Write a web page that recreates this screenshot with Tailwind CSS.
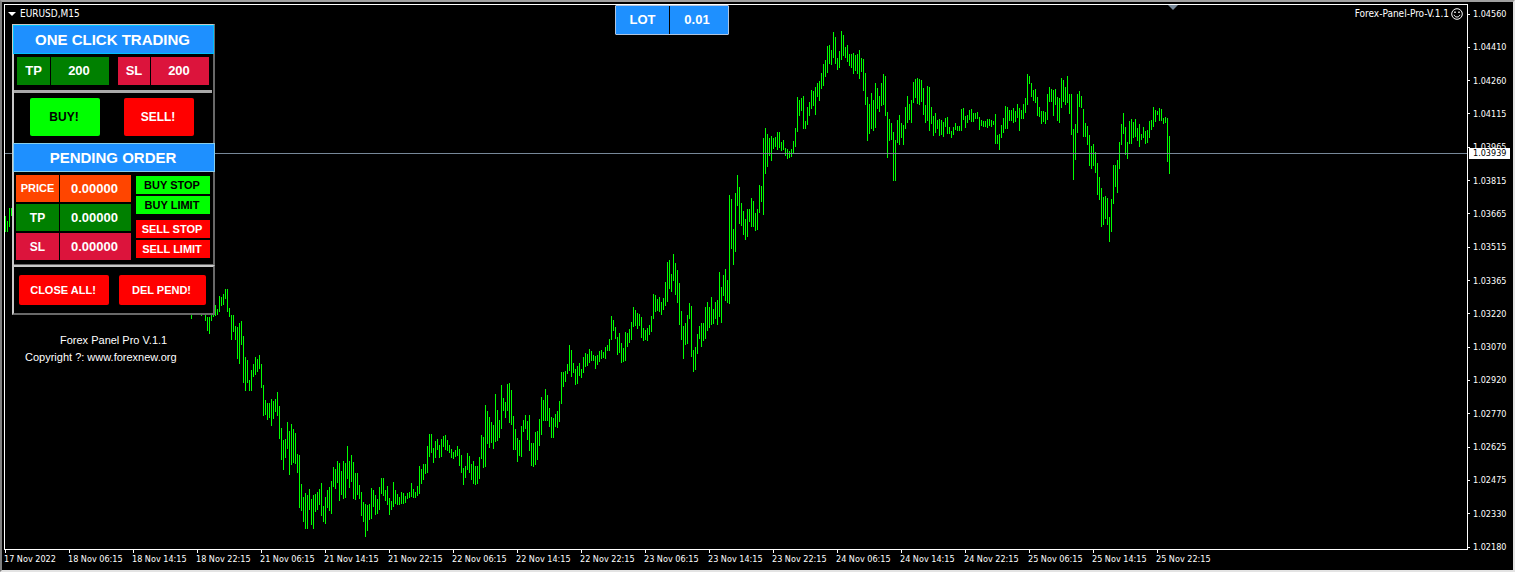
<!DOCTYPE html>
<html lang="en">
  <head>
    <meta charset="UTF-8" />
    <meta name="viewport" content="width=device-width, initial-scale=1.0" />
    <title>EURUSD,M15</title>
    <script src="https://cdn.jsdelivr.net/npm/@tailwindcss/browser@4"></script>
  </head>
  <body class="bg-black">
    <div
      class="h-screen flex flex-col bg-black text-white border-t-2 border-l-2 border-r-2 border-b-2 border-t-[#a0a0a0] border-l-[#808080] border-r-[#e3e3e3] border-b-[#e3e3e3] pt-[2px] pl-[2px] font-['DejaVu_Sans_Condensed','DejaVu_Sans',sans-serif] overflow-hidden"
    >
      <div class="flex flex-1 min-h-0">
        <!-- chart -->
        <main class="relative flex-1 min-w-0 border border-white">
          <svg class="absolute inset-0 w-full h-full" aria-hidden="true">
            <path id="bars" stroke="#00ff00" stroke-width="1" fill="none" />
            <path d="M1163 0h10l-5 5z" fill="#778899" />
          </svg>
          <div class="absolute left-0 right-0 top-[148px] h-px bg-[#778899]"></div>

          <header class="absolute top-0 left-0 right-0 flex justify-between">
            <button class="flex items-center gap-1 pl-[3px] pt-px text-[10px] leading-[14px]">
              <svg class="w-2 h-1" viewBox="0 0 8 4" aria-hidden="true"><path d="M0 0h8L4 4z" fill="#fff" /></svg>
              EURUSD,M15
            </button>
            <p class="flex items-center gap-[2px] pr-1 pt-[2px] text-[10px] leading-[14px]">
              Forex-Panel-Pro-V.1.1
              <svg class="w-3 h-3" viewBox="0 0 12 12" fill="none" stroke="#fff" aria-hidden="true">
                <circle cx="6" cy="6" r="5.3" />
                <path d="M3 6.8c.6 1.6 1.7 2.2 3 2.2s2.400-.6 3-2.200" />
                <path d="M4 3.500v1.500M8 3.500v1.500" stroke-width="1.500" />
              </svg>
            </p>
          </header>

          <div class="absolute top-0 left-[610px] w-[114px] h-[30px] flex gap-px bg-black border border-[#b0c4de] rounded-[1px] font-['Liberation_Sans',Arial,sans-serif] font-bold text-[13px]">
            <label for="lot" class="w-[53px] bg-[#1e90ff] flex items-center justify-center">LOT</label>
            <input id="lot" value="0.01" class="flex-1 min-w-0 bg-[#1e90ff] text-center pr-1 outline-none" />
          </div>

          <!-- trading panel -->
          <section class="absolute top-[19px] left-[7px] w-[203px] font-['Liberation_Sans',Arial,sans-serif] font-bold">
            <div class="bg-black border-t border-l-2 border-r-2 border-t-[#c8c8c8] border-l-[#c8c8c8] border-r-[#696969]">
              <h2 class="-mx-px h-[29px] pt-[2px] pr-[2px] flex items-center justify-center bg-[#1e90ff] border border-[#00bfff] text-[15px]">ONE CLICK TRADING</h2>
              <div class="flex gap-px h-9 pt-[3px] pb-[5px] pl-[3px] pr-1 text-[13px]">
                <label for="tp" class="w-[33px] bg-[#008000] flex items-center justify-center">TP</label>
                <input id="tp" value="200" class="flex-1 min-w-0 bg-[#008000] text-center pr-[2px] mr-2 outline-none" />
                <label for="sl" class="w-8 bg-[#dc143c] flex items-center justify-center">SL</label>
                <input id="sl" value="200" class="flex-1 min-w-0 bg-[#dc143c] text-center pr-[2px] outline-none" />
              </div>
              <div class="h-[3px] mr-px bg-[#a9a9a9]"></div>
              <div class="flex gap-6 pl-4 pt-[5px] pb-[7px] text-[12px]">
                <button class="w-[70px] h-[38px] pr-[2px] rounded-[2px] bg-[#00ff00] text-black">BUY!</button>
                <button class="w-[70px] h-[38px] pr-[2px] rounded-[2px] bg-[#ff0000]">SELL!</button>
              </div>
              <h2 class="-ml-px -mr-[2px] h-[29px] pt-[2px] pr-[2px] flex items-center justify-center bg-[#1e90ff] border border-[#87ceeb] text-[15px]">PENDING ORDER</h2>
              <div class="flex gap-[5px] pt-[3px] pb-1 pl-[2px] pr-[3px] border-b border-[#696969]">
                <div class="flex-1 min-w-0 flex flex-col gap-[2px] text-[13px]">
                  <div class="flex gap-px h-[27px]">
                    <label for="p-price" class="w-[43px] shrink-0 bg-[#ff4500] flex items-center justify-center text-[11px]">PRICE</label>
                    <input id="p-price" value="0.00000" class="flex-1 min-w-0 bg-[#ff4500] text-center pr-[2px] outline-none" />
                  </div>
                  <div class="flex gap-px h-[27px]">
                    <label for="p-tp" class="w-[43px] shrink-0 bg-[#008000] flex items-center justify-center text-[12px]">TP</label>
                    <input id="p-tp" value="0.00000" class="flex-1 min-w-0 bg-[#008000] text-center pr-[2px] outline-none" />
                  </div>
                  <div class="flex gap-px h-[27px]">
                    <label for="p-sl" class="w-[43px] shrink-0 bg-[#dc143c] flex items-center justify-center text-[12px]">SL</label>
                    <input id="p-sl" value="0.00000" class="flex-1 min-w-0 bg-[#dc143c] text-center pr-[2px] outline-none" />
                  </div>
                </div>
                <div class="w-[74px] shrink-0 flex flex-col gap-[2px] pt-px text-[11px] whitespace-nowrap">
                  <button class="h-[18px] pt-px pr-[2px] bg-[#00ff00] text-black">BUY STOP</button>
                  <button class="h-[18px] pt-px pr-[2px] bg-[#00ff00] text-black">BUY LIMIT</button>
                  <button class="h-[18px] pt-px pr-[2px] mt-1 bg-[#ff0000]">SELL STOP</button>
                  <button class="h-[18px] pt-px pr-[2px] bg-[#ff0000]">SELL LIMIT</button>
                </div>
              </div>
            </div>
            <div class="bg-black flex gap-[10px] py-2 pl-[5px] border-2 border-t-[#c8c8c8] border-l-[#c8c8c8] border-r-[#696969] border-b-[#696969] text-[11px]">
              <button class="w-[90px] h-[30px] pr-[2px] pt-px rounded-[2px] bg-[#ff0000]">CLOSE ALL!</button>
              <button class="w-[87px] h-[30px] pr-[2px] pt-px rounded-[2px] bg-[#ff0000]">DEL PEND!</button>
            </div>
            <footer class="pt-[17px] pl-[13px] font-normal text-[11px] leading-[17px]">
              <p class="pl-[35px]">Forex Panel Pro V.1.1</p>
              <p>Copyright ?: www.forexnew.org</p>
            </footer>
          </section>
        </main>

        <!-- price axis -->
        <aside class="relative w-[45px] text-[9px] leading-3">
          <ul id="prices" class="h-[calc(100%+3px)] flex flex-col justify-between pt-1"></ul>
          <p class="absolute top-[144px] left-px w-[41px] h-[11px] pl-1 leading-[11px] bg-white text-black">1.03939</p>
        </aside>
      </div>

      <!-- time axis -->
      <ul id="times" class="h-[20px] flex text-[9px] leading-3"></ul>
    </div>

    <script>
      // high/low of every bar in pixels, 2px per bar, counted from x / y
      const segments = [
        { x: 5, y: 170, bars: "46-62 51-62 38-57 38-46" },
        { x: 191, y: 270, bars: "40-49 40-44 40-44 40-44 40-45 40-46 40-45 40-51 47-61 47-64 40-51 40-47 35-46 39-45 26-42 27-36 24-35 19-29 19-42 38-47 45-70 45-62 56-70 57-89 53-94 51-75 66-113 87-121 90-113 110-121 100-121 94-107 87-105 89-102 85-99 94-118 115-146 130-145 133-150 133-148 129-156 131-149 129-142 122-146 136-169 158-190 170-200 169-188 152-179 161-205 154-195 159-193 163-194 184-203 185-238 214-241 227-252 223-259 225-259 219-240 229-255 225-259 224-242 222-240 219-235 213-246 236-252 227-254 220-238 217-241 211-244 197-217 199-219 191-213 193-231 201-225 191-229 193-228 176-209 191-218 185-212 192-229 203-230 203-225 215-229 222-246 232-252 234-267 235-261 234-250 218-249 220-237 225-245 229-244 217-240 208-224 208-226 220-231 216-235 228-245 231-240 212-237 220-234 224-235 227-235" },
        { x: 401, y: 320, bars: "172-184 173-184 176-183 173-179 172-178 163-177 169-178 172-178 166-176 146-174 149-164 144-160 144-154 126-153 114-137 114-133 128-143 121-138 119-130 125-138 119-137 116-127 115-130 120-131 125-133 129-138 132-139 130-137 126-136 129-146 135-153 148-165 146-158 133-150 136-153 144-160 141-164 146-165 146-164 137-159 115-139 117-148 85-147 91-124 97-128 102-123 105-129 74-122 90-121 100-118 65-109 78-91 82-98 64-91 63-103 70-105 96-130 109-130 118-142 120-136 106-137 100-112 95-109 101-120 95-131 123-146 123-147 112-145 111-140 99-126 77-115 80-101 69-101 75-101 88-107 97-118 98-118 94-107 91-108 81-102 52-84 52-67 51-62 44-54 25-51 30-57 43-53 49-65 46-64 43-56 49-58 37-53 33-47 34-46 29-43 31-41 35-41 36-49 35-45 31-42 30-39 32-38 27-39 25-31 19-31" },
        { x: 611, y: 130, bars: "186-210 190-201 197-209 207-225 203-223 213-233 218-232 202-231 203-217 199-213 192-210 177-197 180-196 183-199 184-196 187-208 198-211 200-210 198-211 195-205 186-202 164-189 165-182 169-181 167-182 172-185 168-180 152-176 132-172 130-159 144-162 124-151 133-165 140-173 153-195 181-210 196-229 193-215 185-214 173-189 176-227 220-242 217-240 204-224 196-209 193-217 193-211 177-209 172-201 177-198 167-195 179-194 172-189 170-195 142-187 157-193 145-166 139-171 150-173 65-174 69-119 99-135 63-122 45-76 57-94 73-96 81-105 89-110 79-107 79-92 68-97 71-97 83-101 79-100 55-83 56-72" },
        { x: 763, y: 20, bars: "118-195 108-154 114-147 118-136 116-141 118-129 117-127 112-130 112-128 122-131 120-130 128-136 129-139 131-138 129-137 121-134 108-127 77-112 80-96 78-91 76-109 101-109 87-105 82-96 70-89 71-86 67-95 63-77 61-81 53-69 44-66 40-57 26-53 25-44 30-45 12-38 17-44 38-50 31-48 11-40 15-36 27-38 25-42 34-46 34-48 33-54 35-51 34-54 30-59 38-52 39-71 53-85 77-121 84-114 73-109 80-111 63-108 68-89 76-92 63-86 54-85 56-96 92-138 99-121 103-120 112-161 120-161 100-123 95-125 103-118 105-125 87-109 76-103 84-100 80-103 62-83 59-78 58-84 59-85 60-82 68-95 85-103 66-101 67-111 87-104 96-116 93-113 100-109 99-116 100-115 102-117 98-107 97-114 107-114 111-118 107-115 103-110 106-111 106-111" },
        { x: 961, y: 60, bars: "49-71 48-60 56-68 55-63 50-60 49-62 53-62 53-59 52-59 57-70 60-66 61-67 61-67 59-68 59-66 60-67 61-65 54-84 75-84 74-90 65-78 58-73 46-69 47-69 50-61 50-61 48-63 51-62 44-58 48-71 50-59 44-59 38-53 14-45 16-24 23-37 30-41 29-43 37-56 47-57 51-64 51-62 52-64 34-60 27-42 29-42 30-56 29-45 37-61 38-63 18-48 20-42 27-45 16-43 34-54 34-75 69-120 64-100 34-73 31-47 36-48 49-77 63-77 66-85 75-106 86-109 84-106 92-113 103-135 117-140 128-167 137-165 136-159 138-165 157-182 139-172 105-144 105-127 100-133 82-109 64-85 53-74 67-95 82-99 61-84 59-84 62-78 59-77 68-81 64-87 74-80 67-78 71-84 70-83 61-78 60-70 47-67 50-62 51-55 48-61 49-61 58-64 57-63 58-102 76-114" },
      ];

      let d = "";
      segments.forEach((seg) => {
        seg.bars.split(" ").forEach((bar, i) => {
          const [high, low] = bar.split("-").map(Number);
          d += `M${seg.x + i * 2 - 4.5} ${seg.y + high - 5}V${seg.y + low - 5}`;
        });
      });
      document.getElementById("bars").setAttribute("d", d);

      const prices = [
        "1.04560", "1.04410", "1.04260", "1.04115", "1.03965", "1.03815",
        "1.03665", "1.03515", "1.03365", "1.03220", "1.03070", "1.02920",
        "1.02770", "1.02625", "1.02475", "1.02330", "1.02180",
      ];
      document.getElementById("prices").innerHTML = prices
        .map((p) => `<li class="flex items-center gap-[3px]"><span class="w-[2px] h-px bg-white"></span>${p}</li>`)
        .join("");

      const times = [
        "17 Nov 2022", "18 Nov 06:15", "18 Nov 14:15", "18 Nov 22:15",
        "21 Nov 06:15", "21 Nov 14:15", "21 Nov 22:15", "22 Nov 06:15",
        "22 Nov 14:15", "22 Nov 22:15", "23 Nov 06:15", "23 Nov 14:15",
        "23 Nov 22:15", "24 Nov 06:15", "24 Nov 14:15", "24 Nov 22:15",
        "25 Nov 06:15", "25 Nov 14:15", "25 Nov 22:15",
      ];
      document.getElementById("times").innerHTML = times
        .map((t) => `<li class="w-16 shrink-0 whitespace-nowrap"><span class="block ml-px w-px h-[3px] bg-white"></span>${t}</li>`)
        .join("");
    </script>
  </body>
</html>
